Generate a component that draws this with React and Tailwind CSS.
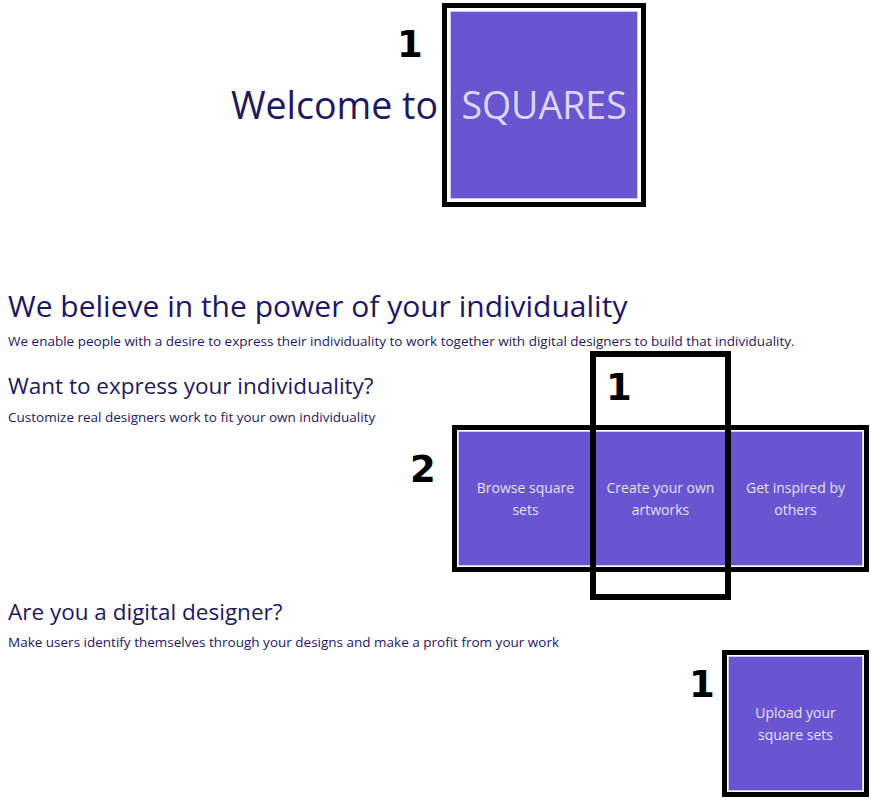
import React from "react";

const Num = ({ children, className }) => (
  <span
    className={
      "absolute text-[37px] leading-none font-bold text-black " + className
    }
    style={{ fontFamily: '"DejaVu Sans", sans-serif' }}
  >
    {children}
  </span>
);

const Tile = ({ children }) => (
  <div className="w-[135px] h-[135px] bg-[#6855cf] border border-[#cfc7f6] flex items-center justify-center text-center px-2.5 text-[14px] leading-[22px] text-[#e6e1fd]">
    {children}
  </div>
);

export default function App() {
  return (
    <div
      className="pl-2 pr-[2px] pt-[3px] pb-2 bg-white text-[#1e1763]"
      style={{ fontFamily: '"Open Sans", sans-serif' }}
    >
      <div className="flex justify-center items-center">
        <h1 className="text-[37.5px] leading-[44px] mr-1">Welcome to</h1>
        <div className="relative border-[5px] border-black p-[3px]">
          <Num className="left-[-50px] top-[18px]">1</Num>
          <div className="w-[188px] h-[188px] bg-[#6855cf] border border-[#cfc7f6] flex items-center justify-center text-[37.5px] leading-[44px] text-[#ddd7fb]">
            SQUARES
          </div>
        </div>
      </div>

      <h2 className="mt-[81px] text-[30px] leading-[36px]">
        We believe in the power of your individuality
      </h2>
      <p className="mt-[7px] text-[13.5px] leading-[20px]">
        We enable people with a desire to express their individuality to work together with digital designers to build that individuality.
      </p>

      <h3 className="mt-[21px] text-[22.5px] leading-[28px]">
        Want to express your individuality?
      </h3>
      <p className="mt-[7px] text-[13.5px] leading-[20px]">
        Customize real designers work to fit your own individuality
      </p>

      <div className="flex justify-end -mt-[2px]">
        <div className="relative border-[5px] border-black p-px">
          <Num className="left-[-47px] top-[21px]">2</Num>
          <div className="flex">
            <Tile>Browse square sets</Tile>
            <Tile>Create your own artworks</Tile>
            <Tile>Get inspired by others</Tile>
          </div>
          <div className="absolute left-[133px] top-[-79px] w-[141px] h-[249px] border-[6px] border-black">
            <Num className="left-[10px] top-[12px]">1</Num>
          </div>
        </div>
      </div>

      <h3 className="mt-[26px] text-[22.5px] leading-[28px]">
        Are you a digital designer?
      </h3>
      <p className="mt-[6px] text-[13.5px] leading-[20px]">
        Make users identify themselves through your designs and make a profit from your work
      </p>

      <div className="flex justify-end -mt-[2px]">
        <div className="relative border-[5px] border-black p-px">
          <Num className="left-[-38px] top-[11px]">1</Num>
          <Tile>Upload your square sets</Tile>
        </div>
      </div>
    </div>
  );
}
